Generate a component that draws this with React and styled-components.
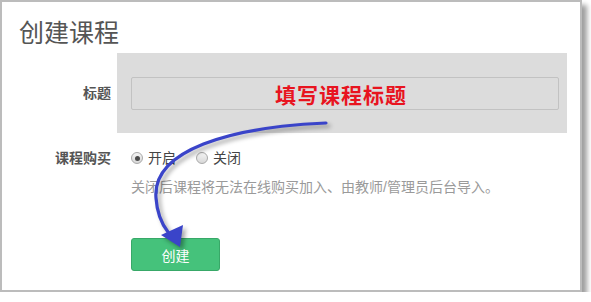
import React, { useState } from 'react';
import styled, { createGlobalStyle } from 'styled-components';

const GlobalStyle = createGlobalStyle`
  body {
    margin: 0;
    background: #fff;
    font-family: "Liberation Sans", "Noto Sans CJK SC", sans-serif;
  }
`;

const Card = styled.div`
  position: relative;
  box-sizing: border-box;
  width: 582px;
  height: 292px;
  border: 2px solid #bcbcbc;
  background: #fff;
  box-shadow: 5px 5px 5px rgba(0, 0, 0, 0.38);
  padding-top: 13px;
`;

const Title = styled.h1`
  margin: 0 0 2px 17px;
  font-size: 25px;
  line-height: 36px;
  font-weight: normal;
  color: #555;
`;

const Row = styled.div`
  display: grid;
  grid-template-columns: 109px 1fr;
  column-gap: 20px;
  align-items: center;
  margin-top: ${p => p.$top || 0}px;
`;

const Label = styled.div`
  text-align: right;
  font-size: 14px;
  font-weight: bold;
  color: #555;
  line-height: 20px;
`;

const Highlight = styled.div`
  margin-left: -14px;
  width: 450px;
  box-sizing: border-box;
  height: 80px;
  padding: 24px 8px 0 14px;
  background: #dcdcdc;
`;

const TitleInput = styled.input`
  box-sizing: border-box;
  width: 428px;
  height: 33px;
  border: 1px solid #c2c2c2;
  border-radius: 2px;
  background: transparent;
  padding: 0 8px 0 0;
  text-align: center;
  font-family: "Noto Sans CJK SC", sans-serif;
  font-size: 21px;
  font-weight: bold;
  letter-spacing: 1px;
  color: #e8141f;
  outline: none;
  &::placeholder { color: #e8141f; opacity: 1; }
`;

const Radios = styled.div`
  display: flex;
  align-items: center;
  line-height: 20px;
`;

const RadioOption = styled.label`
  display: flex;
  align-items: center;
  margin-right: 20px;
  font-size: 14px;
  color: #444;
  cursor: pointer;
`;

const Dot = styled.span`
  position: relative;
  box-sizing: border-box;
  width: 12px;
  height: 12px;
  margin-right: 5px;
  border-radius: 50%;
  border: 1px solid #a9a9a9;
  background: linear-gradient(#f4f4f4, #d8d8d8);
  &::after {
    content: '';
    display: ${p => (p.$on ? 'block' : 'none')};
    position: absolute;
    left: 2.5px;
    top: 2.5px;
    width: 5px;
    height: 5px;
    border-radius: 50%;
    background: #4a4a4a;
  }
`;

const Help = styled.div`
  grid-column: 2;
  margin-top: 9px;
  font-size: 14px;
  line-height: 20px;
  color: #9a9a9a;
  white-space: nowrap;
`;

const Submit = styled.button`
  grid-column: 2;
  justify-self: start;
  width: 89px;
  height: 33px;
  margin-top: 41px;
  border: 1px solid #38a868;
  border-radius: 3px;
  background: #45c27b;
  color: #fff;
  font-family: "Noto Sans CJK SC", sans-serif;
  font-size: 14px;
  cursor: pointer;
`;

const Arrow = styled.svg`
  position: absolute;
  left: -2px;
  top: -2px;
  width: 582px;
  height: 292px;
  pointer-events: none;
  filter: drop-shadow(3px 3px 2px rgba(0, 0, 0, 0.35));
`;

export default function App() {
  const [buy, setBuy] = useState(true);
  return (
    <>
      <GlobalStyle />
      <Card>
        <Title>创建课程</Title>
        <Row>
          <Label>标题</Label>
          <Highlight>
            <TitleInput placeholder="填写课程标题" />
          </Highlight>
        </Row>
        <Row $top={15}>
          <Label>课程购买</Label>
          <Radios>
            <RadioOption onClick={() => setBuy(true)}>
              <Dot $on={buy} />开启
            </RadioOption>
            <RadioOption onClick={() => setBuy(false)}>
              <Dot $on={!buy} />关闭
            </RadioOption>
          </Radios>
          <Help>关闭后课程将无法在线购买加入、由教师/管理员后台导入。</Help>
          <Submit>创建</Submit>
        </Row>
        <Arrow viewBox="0 0 582 292">
          <path
            d="M326 123 C 230 127 152 150 156 198 C 157 213 161 223 168 232"
            fill="none"
            stroke="#3a44c9"
            strokeWidth="3.2"
            strokeLinecap="round"
          />
          <polygon points="180,247 161,235 183,225" fill="#3a44c9" />
        </Arrow>
      </Card>
    </>
  );
}
